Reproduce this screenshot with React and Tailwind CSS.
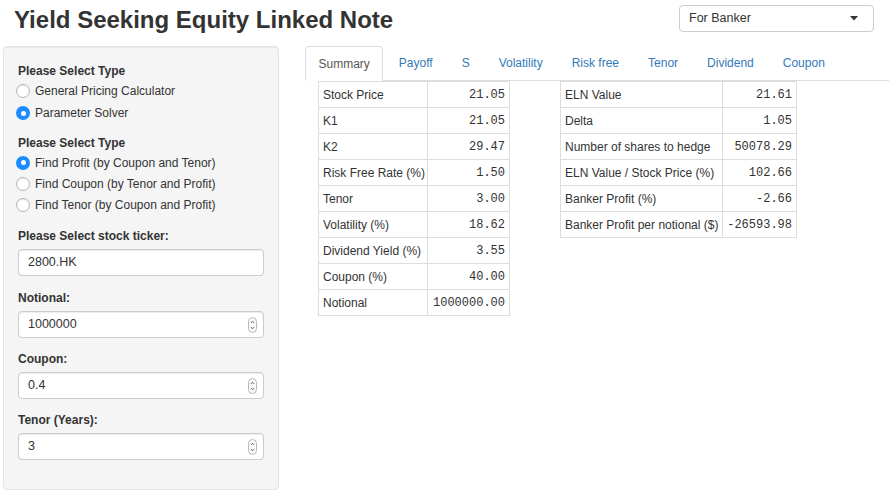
import React from "react";

function Radio({ checked, label, h }) {
  return (
    <div className={"flex items-center " + h}>
      {checked ? (
        <span className="ml-[-2px] flex h-[14px] w-[14px] items-center justify-center rounded-full bg-[#1a8cff]">
          <span className="h-[5px] w-[5px] rounded-full bg-white" />
        </span>
      ) : (
        <span className="ml-[-2px] h-[14px] w-[14px] rounded-full border border-[#b5b5b5] bg-white shadow-[inset_0_1px_1px_rgba(0,0,0,0.08)]" />
      )}
      <span className="ml-[5px]">{label}</span>
    </div>
  );
}

function Spinner() {
  return (
    <svg width="9" height="16" viewBox="0 0 9 16" className="absolute right-[6px] top-1/2 -translate-y-1/2">
      <rect x="0.5" y="0.5" width="8" height="15" rx="4" fill="#fafafa" stroke="#b8b8b8" />
      <path d="M2.8 6 L4.5 4.2 L6.2 6" fill="none" stroke="#555" strokeWidth="0.9" />
      <path d="M2.8 10 L4.5 11.8 L6.2 10" fill="none" stroke="#555" strokeWidth="0.9" />
    </svg>
  );
}

function Input({ value, number }) {
  return (
    <div className="relative mt-[4px] flex h-[27px] items-center rounded-[4px] border border-[#ccc] bg-white pl-[9px] text-[12.5px] shadow-[inset_0_1px_1px_rgba(0,0,0,0.075)]">
      <span>{value}</span>
      {number && <Spinner />}
    </div>
  );
}

function Label({ children, className = "" }) {
  return <div className={"flex h-[18px] items-center font-bold " + className}>{children}</div>;
}

const t1 = [
  ["Stock Price", "21.05"],
  ["K1", "21.05"],
  ["K2", "29.47"],
  ["Risk Free Rate (%)", "1.50"],
  ["Tenor", "3.00"],
  ["Volatility (%)", "18.62"],
  ["Dividend Yield (%)", "3.55"],
  ["Coupon (%)", "40.00"],
  ["Notional", "1000000.00"],
];

const t2 = [
  ["ELN Value", "21.61"],
  ["Delta", "1.05"],
  ["Number of shares to hedge", "50078.29"],
  ["ELN Value / Stock Price (%)", "102.66"],
  ["Banker Profit (%)", "-2.66"],
  ["Banker Profit per notional ($)", "-26593.98"],
];

function DataTable({ rows, w1, w2 }) {
  return (
    <table className="table-fixed border-collapse" style={{ width: w1 + w2 }}>
      <colgroup>
        <col style={{ width: w1 }} />
        <col style={{ width: w2 }} />
      </colgroup>
      <tbody>
        {rows.map(([k, v]) => (
          <tr key={k} className="h-[26px]">
            <td className="whitespace-nowrap border border-[#ddd] pl-[4px] align-middle">{k}</td>
            <td className="whitespace-nowrap border border-[#ddd] pr-[4px] text-right align-middle font-['Liberation_Mono',monospace] text-[12px]">
              {v}
            </td>
          </tr>
        ))}
      </tbody>
    </table>
  );
}

const tabs = ["Summary", "Payoff", "S", "Volatility", "Risk free", "Tenor", "Dividend", "Coupon"];

export default function App() {
  return (
    <div className="h-[502px] w-[889px] overflow-hidden bg-white font-['Liberation_Sans',Arial,sans-serif] text-[12px] text-[#333]">
      <div className="flex h-[46px] items-start">
        <h1 className="ml-[14px] mt-[5px] text-[24px] font-bold leading-[30px] text-[#333]">
          Yield Seeking Equity Linked Note
        </h1>
        <div className="ml-auto mr-[15px] mt-[5px] flex h-[27px] w-[195px] items-center rounded-[4px] border border-[#ccc] bg-white pl-[9px] pr-[15px] text-[12.5px]">
          <span>For Banker</span>
          <svg width="8" height="5" viewBox="0 0 8 5" className="ml-auto">
            <path d="M0 0 H8 L4 4.5 Z" fill="#333" />
          </svg>
        </div>
      </div>
      <div className="flex">
        <div className="ml-[3px] h-[444px] w-[276px] rounded-[4px] border border-[#e3e3e3] bg-[#f5f5f5] px-[14px] pt-[15px] shadow-[inset_0_1px_1px_rgba(0,0,0,0.05)]">
          <Label>Please Select Type</Label>
          <Radio h="h-[22px]" label="General Pricing Calculator" />
          <Radio h="h-[22px]" checked label="Parameter Solver" />
          <Label className="mt-[10px]">Please Select Type</Label>
          <Radio h="h-[21px]" checked label="Find Profit (by Coupon and Tenor)" />
          <Radio h="h-[21px]" label="Find Coupon (by Tenor and Profit)" />
          <Radio h="h-[21px]" label="Find Tenor (by Coupon and Profit)" />
          <Label className="mt-[12px]">Please Select stock ticker:</Label>
          <Input value="2800.HK" />
          <Label className="mt-[13px]">Notional:</Label>
          <Input value="1000000" number />
          <Label className="mt-[12px]">Coupon:</Label>
          <Input value="0.4" number />
          <Label className="mt-[12px]">Tenor (Years):</Label>
          <Input value="3" number />
        </div>
        <div className="ml-[26px] flex-1">
          <div className="flex h-[35px] border-b border-[#ddd] text-[12px]">
            {tabs.map((t, i) =>
              i === 0 ? (
                <div
                  key={t}
                  className="mb-[-1px] mr-[2px] flex items-center rounded-t-[4px] border border-[#ddd] border-b-white bg-white px-[12.5px] text-[#555]"
                >
                  {t}
                </div>
              ) : (
                <div key={t} className="mr-[2px] flex items-center border border-transparent px-[12.5px] text-[#337ab7]">
                  {t}
                </div>
              )
            )}
          </div>
          <div className="ml-[13px] flex items-start">
            <DataTable rows={t1} w1={109} w2={82} />
            <div className="ml-[50px]">
              <DataTable rows={t2} w1={162} w2={74} />
            </div>
          </div>
        </div>
      </div>
    </div>
  );
}
